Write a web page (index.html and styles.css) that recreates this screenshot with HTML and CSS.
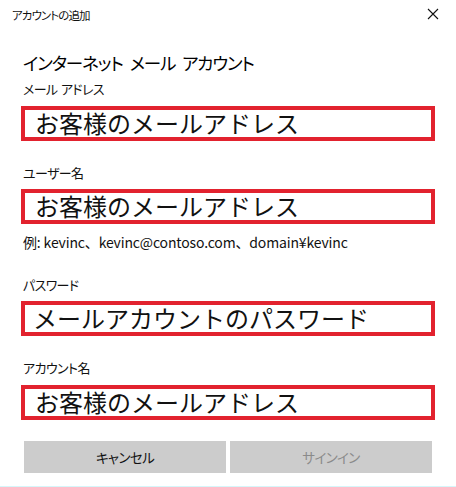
FILE: index.html
```html
<!DOCTYPE html>
<html lang="ja">
<head>
<meta charset="utf-8">
<title>アカウントの追加</title>
<link rel="stylesheet" href="styles.css">
</head>
<body>
<div class="dialog">
  <div class="titlebar">
    <span class="title">アカウントの追加</span>
    <svg class="close" width="12" height="12" viewBox="0 0 12 12"><path d="M1 1 L11 11 M11 1 L1 11" stroke="#111" stroke-width="1.1" fill="none"/></svg>
  </div>
  <div class="content">
    <div class="heading">インターネット メール アカウント</div>
    <div class="label l1">メール アドレス</div>
    <div class="box b1">お客様のメールアドレス</div>
    <div class="label l2">ユーザー名</div>
    <div class="box b2">お客様のメールアドレス</div>
    <div class="hint">例: kevinc、kevinc@contoso.com、domain¥kevinc</div>
    <div class="label l3">パスワード</div>
    <div class="box b3 pw">メールアカウントのパスワード</div>
    <div class="label l4">アカウント名</div>
    <div class="box b4">お客様のメールアドレス</div>
    <div class="buttons">
      <div class="btn">キャンセル</div>
      <div class="btn disabled">サインイン</div>
    </div>
  </div>
</div>
</body>
</html>
```
FILE: styles.css
```css
html, body {
  margin: 0;
  padding: 0;
  background: #ffffff;
}
body {
  font-family: "Noto Sans CJK JP", "Noto Sans", sans-serif;
  color: #000;
}
.dialog {
  width: 456px;
  height: 486px;
  border-bottom: 1px solid #d6f6fa;
  position: relative;
  overflow: hidden;
}
.titlebar {
  height: 30px;
  display: flex;
  align-items: center;
  justify-content: space-between;
  padding: 0 17px 0 12px;
}
.title {
  font-size: 11.5px;
  line-height: 30px;
  letter-spacing: -0.9px;
  font-feature-settings: "palt" 1;
  color: #111;
}
.close {
  margin-top: -2px;
}
.content {
  padding: 0 21px;
  display: flex;
  flex-direction: column;
}
.heading {
  margin-top: 21px;
  padding-left: 2px;
  font-size: 17.5px;
  line-height: 24px;
  letter-spacing: -1.1px;
  word-spacing: 4px;
  font-feature-settings: "palt" 1;
  color: #000;
}
.label {
  padding-left: 2px;
  font-size: 13px;
  line-height: 20px;
  letter-spacing: -0.6px;
  word-spacing: 1px;
  font-feature-settings: "palt" 1;
  color: #111;
}
.l1 { margin-top: 4px; }
.l2 { margin-top: 22px; }
.l3 { margin-top: 23px; }
.l4 { margin-top: 22px; }
.box {
  width: 414px;
  height: 35px;
  box-sizing: border-box;
  border: 4px solid #e2222e;
  padding-left: 10px;
  font-size: 24px;
  line-height: 26px;
  color: #111;
  white-space: nowrap;
}
.box.pw { padding-left: 8px; }
.b1 { margin-top: 7px; }
.b2 { margin-top: 6px; }
.b3 { margin-top: 6px; }
.b4 { margin-top: 7px; }
.hint {
  margin-top: 8px;
  padding-left: 2px;
  font-size: 14px;
  line-height: 20px;
  letter-spacing: -0.15px;
  color: #111;
}
.buttons {
  margin-top: 21px;
  padding: 0 3px;
  display: flex;
  gap: 4px;
}
.btn {
  flex: 1;
  height: 32px;
  background: #cccccc;
  display: flex;
  align-items: center;
  justify-content: center;
  font-size: 13.5px;
  letter-spacing: -0.6px;
  font-feature-settings: "palt" 1;
  color: #111;
}
.btn.disabled {
  color: #8a8a8a;
}
```
